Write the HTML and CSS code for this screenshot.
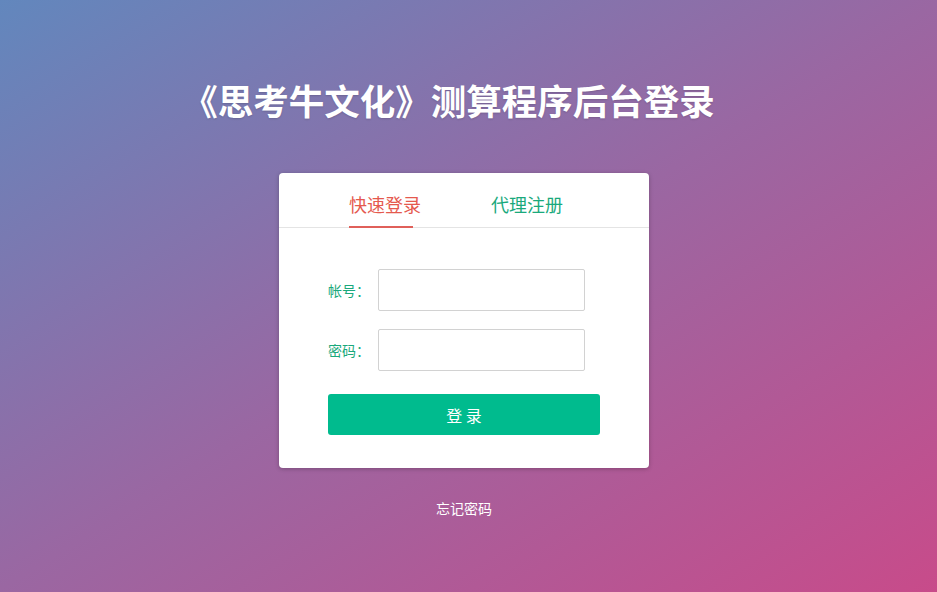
FILE: index.html
```html
<!DOCTYPE html>
<html lang="zh-CN">
<head>
<meta charset="utf-8">
<title>后台登录</title>
<link rel="stylesheet" href="styles.css">
</head>
<body>
<div class="page">
  <h1 class="title">《思考牛文化》测算程序后台登录</h1>
  <div class="card">
    <div class="tabs">
      <div class="tab active">快速登录</div>
      <div class="tab">代理注册</div>
    </div>
    <form class="form">
      <div class="row">
        <label class="label">帐号：</label>
        <input class="input" type="text">
      </div>
      <div class="row">
        <label class="label">密码：</label>
        <input class="input" type="password">
      </div>
      <button class="btn" type="button">登 录</button>
    </form>
  </div>
  <a class="forgot" href="#">忘记密码</a>
</div>
</body>
</html>
```
FILE: styles.css
```css
html, body {
  margin: 0;
  padding: 0;
}
body {
  width: 937px;
  height: 592px;
  overflow: hidden;
  background: linear-gradient(148deg, #6287bd 0%, #9a67a2 50%, #c84b8a 100%);
  font-family: "Noto Sans CJK SC", "Noto Sans", sans-serif;
}
.page {
  width: 928px;
  display: flex;
  flex-direction: column;
  align-items: center;
  padding-top: 78px;
}
.title {
  margin: 0;
  font-size: 35.5px;
  line-height: 44px;
  font-weight: 700;
  color: #fff;
  text-shadow: 0 1px 2px rgba(0,0,0,0.15);
  margin-left: -31px;
}
.card {
  margin-top: 51px;
  width: 370px;
  height: 295px;
  background: #fff;
  border-radius: 4px;
  box-shadow: 0 1px 4px rgba(0,0,0,0.25);
  box-sizing: border-box;
}
.tabs {
  display: flex;
  gap: 70px;
  padding-left: 70px;
  height: 55px;
  border-bottom: 1px solid #e4e4e4;
  box-sizing: border-box;
}
.tab {
  font-size: 18px;
  line-height: 24px;
  padding-top: 19px;
  color: #1aa97c;
  position: relative;
}
.tab.active {
  color: #e5594e;
}
.tab.active::after {
  content: "";
  position: absolute;
  left: 0;
  bottom: -1px;
  width: 64px;
  height: 2px;
  background: #e0605a;
}
.form {
  display: flex;
  flex-direction: column;
  padding: 41px 0 0 49px;
  margin: 0;
}
.row {
  display: flex;
  align-items: center;
  margin-bottom: 18px;
}
.label {
  width: 50px;
  font-size: 14px;
  color: #1aa97c;
}
.input {
  width: 207px;
  height: 42px;
  box-sizing: border-box;
  border: 1px solid #d2d2d2;
  border-radius: 2px;
  margin: 0;
  padding: 0 8px;
  outline: none;
}
.btn {
  margin-top: 5px;
  width: 272px;
  height: 41px;
  border: none;
  border-radius: 3px;
  background: #00bb8e;
  color: #fff;
  font-family: inherit;
  font-size: 16px;
  cursor: pointer;
}
.forgot {
  margin-top: 31px;
  font-size: 14px;
  line-height: 18px;
  color: #fff;
  text-decoration: none;
}
```
